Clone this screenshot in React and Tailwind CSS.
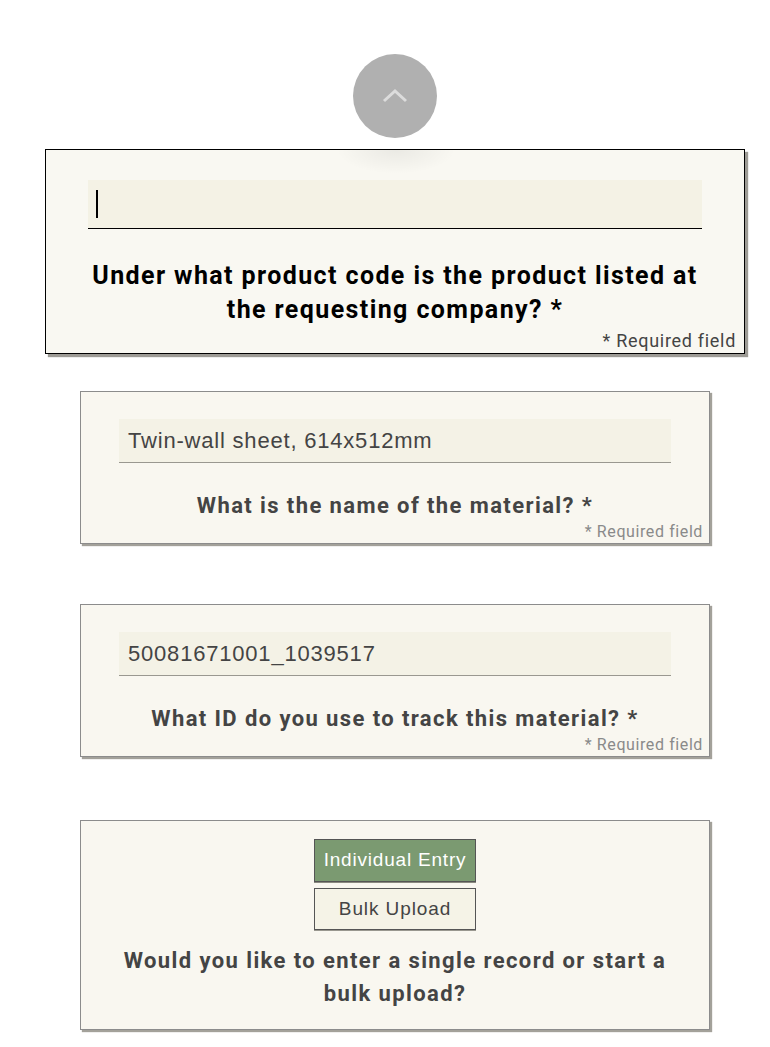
import React from "react";

const roboto = { fontFamily: "Roboto, 'Liberation Sans', sans-serif" };

function Required({ big }) {
  return (
    <div
      className={
        big
          ? "mt-[3px] text-right pr-[8px] text-[18px] leading-[22px] tracking-[0.7px] text-[#444] font-['Roboto',sans-serif]"
          : "text-right pr-[6px] text-[16px] leading-[22px] tracking-[0.6px] text-[#8a8a8a] font-['Roboto',sans-serif]"
      }
    >
      * Required field
    </div>
  );
}

function SmallCard({ value, title, mt }) {
  return (
    <div
      className={`${mt} w-[630px] bg-[#f9f7f0] border border-[#8c8c8c] shadow-[2px_2px_1px_#a3a19a] pt-[27px] pb-0`}
    >
      <div className="mx-[38px] h-[44px] bg-[#f4f2e6] border-b border-[#9a9890] flex items-center pl-[9px] text-[22px] tracking-[0.8px] text-[#444] font-['Liberation_Sans',Arial,sans-serif]">
        {value}
      </div>
      <div className="mt-[28px] text-center text-[22px] leading-[30px] tracking-[1.4px] font-bold text-[#444] font-['Roboto',sans-serif]">
        {title}
      </div>
      <Required />
    </div>
  );
}

export default function App() {
  return (
    <div className="min-h-[1047px] bg-white pl-[20px] flex flex-col items-center" style={roboto}>
      <div className="mt-[54px] w-[84px] h-[84px] rounded-full bg-[#b0b0b0] flex items-center justify-center">
        <svg width="28" height="16" viewBox="0 0 28 16" fill="none">
          <path d="M3 13 L14 3 L25 13" stroke="#dcdcdc" strokeWidth="3" />
        </svg>
      </div>

      <div className="relative mt-[11px] w-[700px] bg-[#f9f8f2] border border-black shadow-[3px_3px_1px_#9d9b95] pt-[30px] pb-[1px]">
        <div className="absolute left-[290px] top-0 w-[120px] h-[24px] bg-[radial-gradient(ellipse_at_top,rgba(0,0,0,0.06),rgba(0,0,0,0)_70%)]" />
        <div className="mx-[42px] h-[49px] bg-[#f4f2e5] border-b border-black flex items-center pl-[8px]">
          <div className="w-[2px] h-[28px] bg-black" />
        </div>
        <div className="mt-[30px] px-[40px] text-center text-[25px] leading-[34px] tracking-[1.4px] font-bold text-black font-['Roboto',sans-serif]">
          Under what product code is the product listed at the requesting company? *
        </div>
        <Required big />
      </div>

      <SmallCard
        mt="mt-[37px]"
        value="Twin-wall sheet, 614x512mm"
        title="What is the name of the material? *"
      />
      <SmallCard
        mt="mt-[60px]"
        value="50081671001_1039517"
        title="What ID do you use to track this material? *"
      />

      <div className="mt-[63px] w-[630px] bg-[#f9f7f0] border border-[#8c8c8c] shadow-[2px_2px_1px_#a3a19a] pt-[18px] pb-[19px] flex flex-col items-center">
        <div className="w-[162px] h-[43px] bg-[#7b9a71] border border-[#555] shadow-[0_1px_0_#8a8a80] flex items-center justify-center text-[19px] tracking-[0.8px] text-white font-['Liberation_Sans',Arial,sans-serif]">
          Individual Entry
        </div>
        <div className="mt-[6px] w-[162px] h-[42px] bg-[#f5f3e7] border border-[#555] shadow-[0_1px_0_#9a9890] flex items-center justify-center text-[19px] tracking-[0.9px] text-[#444] font-['Liberation_Sans',Arial,sans-serif]">
          Bulk Upload
        </div>
        <div className="mt-[14px] px-[40px] text-center text-[22px] leading-[33px] tracking-[1.4px] font-bold text-[#444] font-['Roboto',sans-serif]">
          Would you like to enter a single record or start a bulk upload?
        </div>
      </div>
    </div>
  );
}
